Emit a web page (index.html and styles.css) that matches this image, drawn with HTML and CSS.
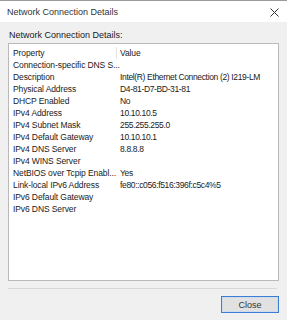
FILE: index.html
```html
<!DOCTYPE html>
<html lang="en">
<head>
    <meta charset="UTF-8">
    <title>Network Connection Details</title>
    <link rel="stylesheet" href="styles.css">
</head>
<body>
    <div class="titlebar">
        <span class="title">Network Connection Details</span>
        <svg class="close-x" width="9" height="9" viewBox="0 0 9 9">
            <path d="M0.5 0.5 L8.5 8.5 M8.5 0.5 L0.5 8.5" stroke="#333" stroke-width="1"/>
        </svg>
    </div>
    <div class="content">
        <div class="label">Network Connection Details:</div>
        <div class="listbox">
            <div class="row head">
                <div class="prop">Property</div>
                <div class="val">Value</div>
            </div>
            <div class="row"><div class="prop">Connection-specific DNS S...</div><div class="val"></div></div>
            <div class="row"><div class="prop">Description</div><div class="val">Intel(R) Ethernet Connection (2) I219-LM</div></div>
            <div class="row"><div class="prop">Physical Address</div><div class="val">D4-81-D7-BD-31-81</div></div>
            <div class="row"><div class="prop">DHCP Enabled</div><div class="val">No</div></div>
            <div class="row"><div class="prop">IPv4 Address</div><div class="val">10.10.10.5</div></div>
            <div class="row"><div class="prop">IPv4 Subnet Mask</div><div class="val">255.255.255.0</div></div>
            <div class="row"><div class="prop">IPv4 Default Gateway</div><div class="val">10.10.10.1</div></div>
            <div class="row"><div class="prop">IPv4 DNS Server</div><div class="val">8.8.8.8</div></div>
            <div class="row"><div class="prop">IPv4 WINS Server</div><div class="val"></div></div>
            <div class="row"><div class="prop">NetBIOS over Tcpip Enabl...</div><div class="val">Yes</div></div>
            <div class="row"><div class="prop">Link-local IPv6 Address</div><div class="val">fe80::c056:f516:396f:c5c4%5</div></div>
            <div class="row"><div class="prop">IPv6 Default Gateway</div><div class="val"></div></div>
            <div class="row"><div class="prop">IPv6 DNS Server</div><div class="val"></div></div>
        </div>
        <div class="separator"></div>
        <div class="actions">
            <button class="btn">Close</button>
        </div>
    </div>
</body>
</html>
```

FILE: styles.css
```css
body { margin: 0; background: #f0f0f0; font-family: 'Liberation Sans', Arial, sans-serif; font-size: 9px; color: #1a1a1a; width: 287px; height: 320px; overflow: hidden; }
.titlebar { height: 21px; background: #fff; border-top: 1px solid #9a9a9a; display: flex; align-items: center; justify-content: space-between; padding: 0 8px 0 7px; }
.title { font-size: 9px; color: #333; }
.close-x { margin-top: 1px; }
.content { padding: 8px 8px 0 8px; }
.label { height: 13px; line-height: 11px; padding-left: 1px; }
.listbox { height: 233px; background: #fff; border: 1px solid #b9b9b9; padding-top: 3px; font-size: 8.5px; }
.row { display: flex; height: 12px; line-height: 12px; }
.prop { flex-shrink: 0; width: 103px; padding-left: 4px; white-space: nowrap; letter-spacing: -0.1px; }
.val { padding-left: 4px; white-space: nowrap; letter-spacing: -0.35px; }
.head .val { border-left: 1px solid #e3e3e3; padding-left: 3px; letter-spacing: -0.1px; }
.separator { margin: 7px 2px 0 0; border-top: 1px solid #d7d7d7; }
.actions { display: flex; justify-content: flex-end; padding-top: 7px; }
.btn { width: 58px; height: 17px; padding: 0; background: #e1e1e1; border: 1px solid #3c7ed6; box-shadow: inset 0 0 0 1px #d0dcec; font-family: inherit; font-size: 9px; color: #333; }
```
